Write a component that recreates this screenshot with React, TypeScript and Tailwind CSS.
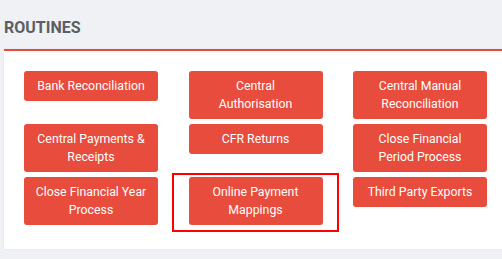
const routines = [
  'Bank Reconciliation',
  'Central Authorisation',
  'Central Manual Reconciliation',
  'Central Payments & Receipts',
  'CFR Returns',
  'Close Financial Period Process',
  'Close Financial Year Process',
  'Online Payment Mappings',
  'Third Party Exports',
];

const breaks: Record<string, string[]> = {
  'Central Authorisation': ['Central', 'Authorisation'],
  'Central Manual Reconciliation': ['Central Manual', 'Reconciliation'],
  'Central Payments & Receipts': ['Central Payments &', 'Receipts'],
  'Close Financial Period Process': ['Close Financial', 'Period Process'],
  'Close Financial Year Process': ['Close Financial Year', 'Process'],
  'Online Payment Mappings': ['Online Payment', 'Mappings'],
};

export default function App() {
  return (
    <div className="w-[502px] h-[259px] overflow-hidden bg-[#f0f1f5] pt-[16px] font-['Roboto',sans-serif]">
      <h2 className="pl-[4px] h-[24px] leading-[24px] text-[16px] font-bold text-[#5b5e63] mb-[9px]">
        ROUTINES
      </h2>

      {/* panel */}
      <div className="ml-[4px] w-[520px] h-[200px] bg-white border-t-2 border-[#e74c3c] pt-[20px] pl-[20px] shadow-[0_0_1px_rgba(0,0,0,0.12)]">
        <div className="grid grid-cols-[134px_134px_134px] auto-rows-[48px] gap-x-[30.5px] gap-y-[5px]">
          {routines.map((name) => {
            const lines = breaks[name] ?? [name];
            return (
              <div key={name} className="relative">
                <button className="w-full rounded-[3px] bg-[#e74c3c] px-2 py-[6px] text-center text-[12.3px] leading-[18px] text-white">
                  {lines.map((l) => (
                    <span key={l} className="block">
                      {l}
                    </span>
                  ))}
                </button>
                {name === 'Online Payment Mappings' && (
                  <div className="absolute -left-[17px] -top-[4px] w-[167px] h-[59px] border-2 border-[#ff0000] pointer-events-none" />
                )}
              </div>
            );
          })}
        </div>
      </div>
    </div>
  );
}
